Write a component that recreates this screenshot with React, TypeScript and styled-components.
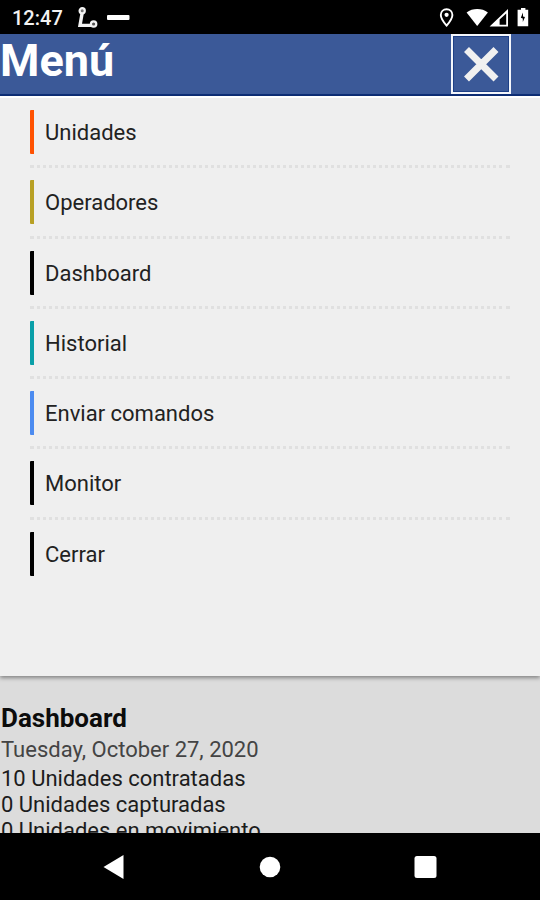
import React from "react";
import styled, { createGlobalStyle } from "styled-components";

const GlobalStyle = createGlobalStyle`
  *, *::before, *::after { box-sizing: border-box; }
  body {
    margin: 0;
    background: #000;
    color: #1c1c1c;
    font-family: Roboto, "Liberation Sans", sans-serif;
  }
`;

const Screen = styled.div`
  display: flex;
  flex-direction: column;
  height: 100vh;
  overflow: hidden;
`;

const StatusBar = styled.div`
  display: flex;
  flex: none;
  align-items: center;
  justify-content: space-between;
  height: 34px;
  padding: 0 8px 0 12px;
  background: #000;
  color: #f2f2f2;
`;

const StatusGroup = styled.div`
  display: flex;
  align-items: center;
  gap: 8px;
`;

const Clock = styled.time`
  margin-right: 6px;
  padding-top: 2px;
  font-size: 20px;
  font-weight: 500;
  line-height: 24px;
`;

const Header = styled.header`
  display: flex;
  flex: none;
  align-items: flex-start;
  justify-content: space-between;
  height: 62px;
  padding-right: 29px;
  border-bottom: 2px solid #0e2f78;
  background: #3b5998;
  color: #fff;
`;

const Title = styled.h1`
  margin: 0;
  font-size: 45px;
  font-weight: 700;
  line-height: 54px;
`;

const CloseButton = styled.button`
  display: flex;
  align-items: center;
  justify-content: center;
  width: 60px;
  height: 60px;
  padding: 0;
  border: 2px solid #f4f6fb;
  background: #3b5998;
  box-shadow: inset 0 0 0 1px #1d3f86;
  color: #f0f0f0;
`;

const MenuPanel = styled.nav`
  position: relative;
  flex: none;
  padding: 0 30px 86px;
  border-top: 2px solid #fff;
  background: #efefef;
  box-shadow: 0 2px 4px rgba(0, 0, 0, 0.4);
`;

const MenuList = styled.ul`
  display: grid;
  grid-auto-rows: 1fr;
  min-height: 492px;
  margin: 0;
  padding: 0;
  list-style: none;
`;

const MenuItem = styled.li`
  padding-top: 12px;

  &:not(:last-child) {
    border-bottom: 3px dotted #e0e0e0;
  }
`;

const MenuLink = styled.a<{ $accent: string }>`
  display: block;
  padding: 2px 0 0 11px;
  border-left: 4px solid ${(p) => p.$accent};
  border-radius: 1px;
  color: #222;
  font-size: 22px;
  line-height: 42px;
  text-decoration: none;
`;

const Dashboard = styled.main`
  flex: 1;
  min-height: 0;
  overflow: hidden;
  padding: 26px 1px 0;
  background: #dcdcdc;
`;

const SectionTitle = styled.h2`
  margin: 0;
  color: #0c0c0c;
  font-size: 26px;
  font-weight: 700;
  line-height: 32px;
`;

const DateLine = styled.p`
  margin: 0;
  color: #444;
  font-size: 22px;
  line-height: 32px;
`;

const Stat = styled.p`
  margin: 0;
  font-size: 22px;
  line-height: 26px;
`;

const NavBar = styled.footer`
  display: flex;
  flex: none;
  align-items: center;
  justify-content: space-around;
  height: 67px;
  padding: 0 36px;
  background: #000;
`;

const NavButton = styled.button`
  display: flex;
  align-items: center;
  justify-content: center;
  width: 48px;
  height: 48px;
  padding: 0;
  border: 0;
  background: none;
  color: #fff;
`;

const items = [
  { label: "Unidades", accent: "#ff5202" },
  { label: "Operadores", accent: "#b8a024" },
  { label: "Dashboard", accent: "#000000" },
  { label: "Historial", accent: "#0a9fa8" },
  { label: "Enviar comandos", accent: "#4c8bf0" },
  { label: "Monitor", accent: "#000000" },
  { label: "Cerrar", accent: "#000000" },
];

const stats = [
  "10 Unidades contratadas",
  "0 Unidades capturadas",
  "0 Unidades en movimiento",
];

const RouteIcon = () => (
  <svg width="22" height="22" viewBox="0 0 22 22" fill="none" stroke="#f2f2f2" aria-hidden="true">
    <path d="M5.5 5 3 19.4H16" strokeWidth="3.4" />
    <circle cx="5.2" cy="4.8" r="2.6" strokeWidth="2.2" fill="#777" />
    <circle cx="16.6" cy="18" r="2.7" strokeWidth="2.2" fill="#555" />
  </svg>
);

const DashIcon = () => (
  <svg width="24" height="22" viewBox="0 0 24 22" aria-hidden="true">
    <rect x="0" y="9" width="22.5" height="5" rx="1" fill="#fff" />
  </svg>
);

const SystemIcons = () => (
  <svg width="94" height="22" viewBox="0 0 94 22" fill="#fff" aria-hidden="true">
    <path d="M8.6 3.2c-3.3 0-5.8 2.4-5.8 5.7 0 3.9 5.8 10.7 5.8 10.7s5.8-6.8 5.8-10.7c0-3.3-2.5-5.7-5.8-5.7Z" fill="none" stroke="#fff" strokeWidth="1.9" />
    <circle cx="8.6" cy="8.8" r="2.1" />
    <path d="M28.6 6.4C34.5 1.8 44 1.8 49.9 6.4L39.2 20Z" />
    <path d="M70 3V20.6H51.6ZM68.2 7.4 61.6 13.6V18.8H68.2Z" fillRule="evenodd" />
    <path d="M80.4 3.8H83V2H87.4V3.8H90.2V20.2H79.6V3.8Z" />
    <path d="m85 6.6-2.2 5.2 2 .8v3.4l2.2-5-2-.6Z" fill="#000" />
  </svg>
);

const CloseIcon = () => (
  <svg width="38" height="38" viewBox="0 0 38 38" fill="none" stroke="currentColor" strokeWidth="7" aria-hidden="true">
    <path d="M4.5 4.5 34 34M34 4.5 4.5 34" />
  </svg>
);

export default function App() {
  return (
    <>
      <GlobalStyle />
      <Screen>
        <StatusBar>
          <StatusGroup>
            <Clock>12:47</Clock>
            <RouteIcon />
            <DashIcon />
          </StatusGroup>
          <SystemIcons />
        </StatusBar>
        <Header>
          <Title>Menú</Title>
          <CloseButton type="button" aria-label="Cerrar menú">
            <CloseIcon />
          </CloseButton>
        </Header>
        <MenuPanel aria-label="Menú">
          <MenuList>
            {items.map((item) => (
              <MenuItem key={item.label}>
                <MenuLink href="#" $accent={item.accent}>
                  {item.label}
                </MenuLink>
              </MenuItem>
            ))}
          </MenuList>
        </MenuPanel>
        <Dashboard>
          <SectionTitle>Dashboard</SectionTitle>
          <DateLine>Tuesday, October 27, 2020</DateLine>
          {stats.map((stat) => (
            <Stat key={stat}>{stat}</Stat>
          ))}
        </Dashboard>
        <NavBar>
          <NavButton type="button" aria-label="Atrás">
            <svg width="24" height="26" viewBox="0 0 24 26" fill="currentColor" aria-hidden="true">
              <path d="M21.5 1V25L1.5 13Z" />
            </svg>
          </NavButton>
          <NavButton type="button" aria-label="Inicio">
            <svg width="24" height="24" viewBox="0 0 24 24" fill="currentColor" aria-hidden="true">
              <circle cx="12" cy="12" r="10.3" />
            </svg>
          </NavButton>
          <NavButton type="button" aria-label="Recientes">
            <svg width="24" height="24" viewBox="0 0 24 24" fill="currentColor" aria-hidden="true">
              <rect x="0.5" y="1" width="22" height="22" rx="2.5" />
            </svg>
          </NavButton>
        </NavBar>
      </Screen>
    </>
  );
}
